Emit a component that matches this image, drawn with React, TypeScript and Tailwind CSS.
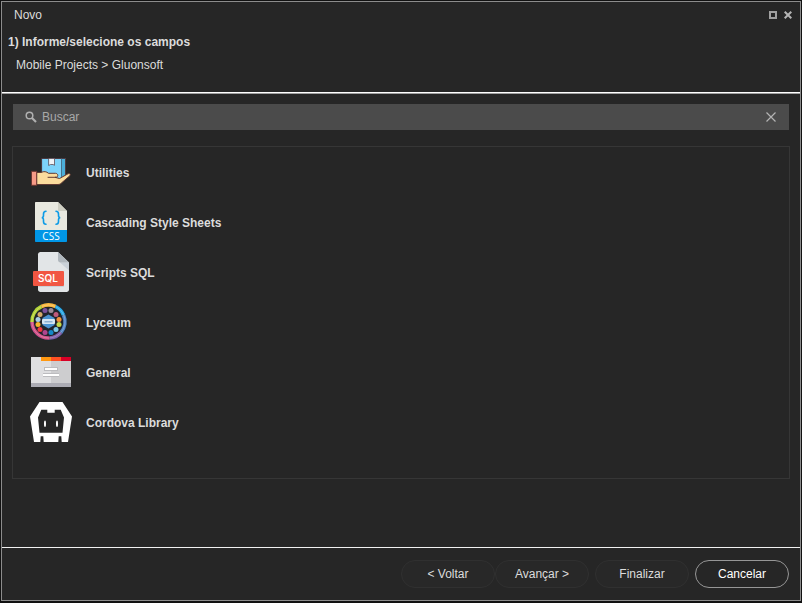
import type { ReactNode } from "react";

function UtilitiesIcon() {
  return (
    <svg viewBox="0 0 40 40" className="size-10" strokeLinejoin="round" strokeLinecap="round">
      <path d="M11 6.500h23.500v16l-7 6H11z" fill="#7cd3fa" stroke="#4b3b42" />
      <path d="M31 7h3v16l-3 2z" fill="#4bafd9" />
      <path d="M30.500 6.500v18" stroke="#3a5970" strokeWidth=".8" />
      <path d="M18 6.500h5.500v6.800l-1.500-.8h-2.500l-1.500.8z" fill="#eef3f6" stroke="#5e4e58" strokeWidth=".8" />
      <path
        d="M6 20.500h4c3-1.500 5.500-1 7.500.8h7c2.500 0 3.200 3.200.8 4h-1.300l4.500 1.200L37 21.800c1.500-.9 3 .3 1.900 1.900L31 30.500c-1.200 1.300-2.300 2-4 2H6z"
        fill="#fbdc9d"
        stroke="#613a33"
      />
      <path d="M17 25.300h8" stroke="#613a33" />
      <path d="M.7 19.300h5v14h-5z" fill="#f79a86" stroke="#6b352f" />
    </svg>
  );
}

function CssIcon() {
  return (
    <svg viewBox="0 0 40 40" className="size-10">
      <path d="M5 0h22l9 9v19H4V1c0-.6.4-1 1-1z" fill="#e9e9e0" />
      <path d="M27 0v9h9z" fill="#cfcfc3" />
      <path d="M4 28h32v11c0 .6-.4 1-1 1H5c-.6 0-1-.4-1-1z" fill="#0096e6" />
      <g fill="none" stroke="#0c9be6" strokeWidth="1.600" strokeLinecap="round">
        <path d="M15 9.300c-2.500 0-2.500 1.200-2.500 2.700v1.500c0 1.500-.5 2.200-1.800 2.200 1.300 0 1.800.7 1.800 2.200v1.600c0 1.500 0 2.700 2.500 2.700" />
        <path d="M25 9.300c2.500 0 2.500 1.200 2.500 2.700v1.500c0 1.500.5 2.200 1.800 2.200-1.300 0-1.800.7-1.800 2.200v1.600c0 1.500 0 2.700-2.500 2.700" />
      </g>
      <text x="20" y="38" textAnchor="middle" fill="#fff" className="font-['Open_Sans',sans-serif] text-[10px] font-medium">
        CSS
      </text>
    </svg>
  );
}

function SqlIcon() {
  return (
    <svg viewBox="0 0 40 40" className="size-10">
      <path d="M9.500 0H27l11 10.500v27c0 1.500-1 2.500-2.500 2.500h-26C8 40 7 39 7 37.500v-35C7 1 8 0 9.500 0z" fill="#e2e5e7" />
      <path d="M29 10.500l9 8v-8z" fill="#cad1d8" />
      <path d="M27 0l11 10.500h-8.500c-1.500 0-2.500-1-2.500-2.500z" fill="#b0b7bd" />
      <path d="M7 34h26v1H8z" fill="#cad1d8" />
      <rect x="2" y="19" width="31" height="15" rx="1" fill="#f15642" />
      <text x="17" y="30" textAnchor="middle" fill="#fff" className="font-['Inter',sans-serif] text-[10px] font-semibold">
        SQL
      </text>
    </svg>
  );
}

const lyceumDots = [
  { x: 20, y: 8, color: "#9a8c98" },
  { x: 25, y: 12, color: "#c05b7c" },
  { x: 28, y: 17, color: "#f3913b" },
  { x: 28, y: 22, color: "#c3d94a" },
  { x: 25, y: 27, color: "#7ecbe8" },
  { x: 20, y: 30, color: "#1488c8" },
  { x: 14, y: 30, color: "#b0458f" },
  { x: 9, y: 27, color: "#ee3a44" },
  { x: 7, y: 22, color: "#f5b32f" },
  { x: 7, y: 17, color: "#a9cfe6" },
  { x: 9, y: 12, color: "#d5ab68" },
  { x: 14, y: 8, color: "#7d519b" },
];

function LyceumIcon() {
  return (
    <svg viewBox="0 -0.5 40 40" className="size-10 overflow-visible">
      <circle cx="17.500" cy="19" r="19" fill="#192a35" />
      <circle cx="17.500" cy="19" r="14.500" fill="#22242b" />
      <g fill="none" strokeWidth="3.600">
        <path d="M1 19.500A16.500 16.500 0 0 1 10.500 4" stroke="#b5d334" />
        <path d="M10.500 4A16.500 16.500 0 0 1 24.500 4" stroke="#fbb73c" />
        <path d="M24.500 4A16.500 16.500 0 0 1 32.500 12.500" stroke="#2aa9e8" />
        <path d="M32.500 12.500A16.500 16.500 0 0 1 30 30" stroke="#5385c5" />
        <path d="M30 30A16.500 16.500 0 0 1 18.500 35.500" stroke="#8060a8" />
        <path d="M18.500 35.500A16.500 16.500 0 0 1 1 19.500" stroke="#d14f87" />
      </g>
      <circle cx="17.500" cy="19" r="16.500" fill="none" stroke="#fff" strokeOpacity=".3" strokeWidth=".8" />
      {lyceumDots.map((dot) => (
        <circle key={dot.color} cx={dot.x} cy={dot.y} r="2.500" fill={dot.color} />
      ))}
      <path d="M17.500 12l6 3.500v7l-6 3.500-6-3.500v-7z" fill="#4b93d0" />
      <rect x="11" y="16.500" width="13" height="5" rx="1" fill="#d5e6f3" />
      <path d="M13.500 19.300h8" stroke="#7ba5cb" strokeWidth="1.200" />
    </svg>
  );
}

function GeneralIcon() {
  return (
    <svg viewBox="0 0 40 40" className="size-10" shapeRendering="crispEdges">
      <path d="M0 5h20v26H0z" fill="#dfdfe1" />
      <path d="M20 5h20v26H20z" fill="#cdcdcf" />
      <path d="M0 31h40v4H0z" fill="#acacb4" />
      <path d="M10 5h10v4H10z" fill="#ff9811" />
      <path d="M20 5h10v4H20z" fill="#ff5023" />
      <path d="M30 5h10v4H30z" fill="#d80027" />
      <path d="M13 15h14v4H13zM12 21h16v4H12z" fill="#bcbcbf" />
      <path d="M14 16h12v2H14zM12 22h16v2H12z" fill="#fff" />
    </svg>
  );
}

function CordovaIcon() {
  return (
    <svg viewBox="0 0 40 40" className="size-10 overflow-visible">
      <path
        fillRule="evenodd"
        fill="#fff"
        d="M8.500 0h23L41 14.500 37 40h-6.300l-.4-5.700h-2.600l-.4 5.700H12.700l-.4-5.700H9.700l-.4 5.700H3L-1 14.500zM10.300 7.700L7 15.500l1.500 15.200h23L33 15.500l-3.300-7.800h-6v3h-7.400v-3z"
      />
      <ellipse cx="14" cy="21.800" rx="1" ry="3.300" fill="#fff" />
      <ellipse cx="26" cy="21.800" rx="1" ry="3.300" fill="#fff" />
    </svg>
  );
}

const categories: { label: string; icon: ReactNode }[] = [
  { label: "Utilities", icon: <UtilitiesIcon /> },
  { label: "Cascading Style Sheets", icon: <CssIcon /> },
  { label: "Scripts SQL", icon: <SqlIcon /> },
  { label: "Lyceum", icon: <LyceumIcon /> },
  { label: "General", icon: <GeneralIcon /> },
  { label: "Cordova Library", icon: <CordovaIcon /> },
];

const footerButton = "h-7 w-[94px] rounded-full border text-center";

export default function App() {
  return (
    <div className="flex min-h-screen flex-col bg-[#111111] px-px pt-px pb-0.5 font-['Liberation_Sans',Arial,sans-serif] text-xs text-[#dcdcdc]">
      <main className="flex flex-1 flex-col border border-[#8c8c8c] bg-[#262626]">
        <header className="border-b border-[#a0a0a0]">
          <div className="border-b border-white pb-[18px]">
            <div className="flex h-[26px] items-center justify-between pr-2 pl-3">
              <span>Novo</span>
              <div className="flex items-center gap-[7px]">
                <button type="button" aria-label="Maximizar" className="size-2 border-2 border-[#a0a0a0]" />
                <button type="button" aria-label="Fechar">
                  <svg viewBox="0 0 8 8" className="size-2" stroke="#b4b4b4" strokeWidth="2">
                    <path d="M.7.7l6.600 6.600M7.300.7L.7 7.300" />
                  </svg>
                </button>
              </div>
            </div>
            <h1 className="mt-1 pl-1.5 text-xs leading-5 font-bold">1) Informe/selecione os campos</h1>
            <p className="mt-1 pl-3.5 leading-[18px]">Mobile Projects &gt; Gluonsoft</p>
          </div>
        </header>

        <div className="flex-1 px-2.5 pt-2.5">
          <div className="mx-px flex h-[26px] items-center bg-[#4b4b4b] px-3">
            <svg viewBox="0 0 12 12" className="mr-[5px] size-3" fill="none" stroke="#b0b0b0">
              <circle cx="4.500" cy="4.500" r="3.300" strokeWidth="1.500" />
              <path d="M7 7l4 4" strokeWidth="2.200" />
            </svg>
            <input
              type="text"
              aria-label="Buscar"
              placeholder="Buscar"
              className="min-w-0 flex-1 bg-transparent outline-none placeholder:text-[#a8a8a8]"
            />
            <button type="button" aria-label="Limpar">
              <svg viewBox="0 0 12 12" className="size-3" stroke="#b4b4b4" strokeWidth="1.200">
                <path d="M1.500 1.500l9 9M10.500 1.500l-9 9" />
              </svg>
            </button>
          </div>

          <ul className="mt-4 min-h-[333px] border border-[#363636]">
            {categories.map((category) => (
              <li key={category.label} className="flex h-[50px] items-center gap-[15px] pl-[18px] font-bold">
                {category.icon}
                <span className="pt-0.5">{category.label}</span>
              </li>
            ))}
          </ul>
        </div>

        <footer className="flex justify-end border-t border-[#f0f0f0] px-[11px] py-3">
          <button type="button" className={`${footerButton} border-[#303030] bg-[#282828]`}>
            &lt; Voltar
          </button>
          <button type="button" className={`${footerButton} border-[#303030] bg-[#282828]`}>
            Avançar &gt;
          </button>
          <button type="button" className={`${footerButton} ml-1.5 border-[#303030] bg-[#282828]`}>
            Finalizar
          </button>
          <button type="button" className={`${footerButton} ml-1.5 border-[#969696] text-white`}>
            Cancelar
          </button>
        </footer>
      </main>
    </div>
  );
}
